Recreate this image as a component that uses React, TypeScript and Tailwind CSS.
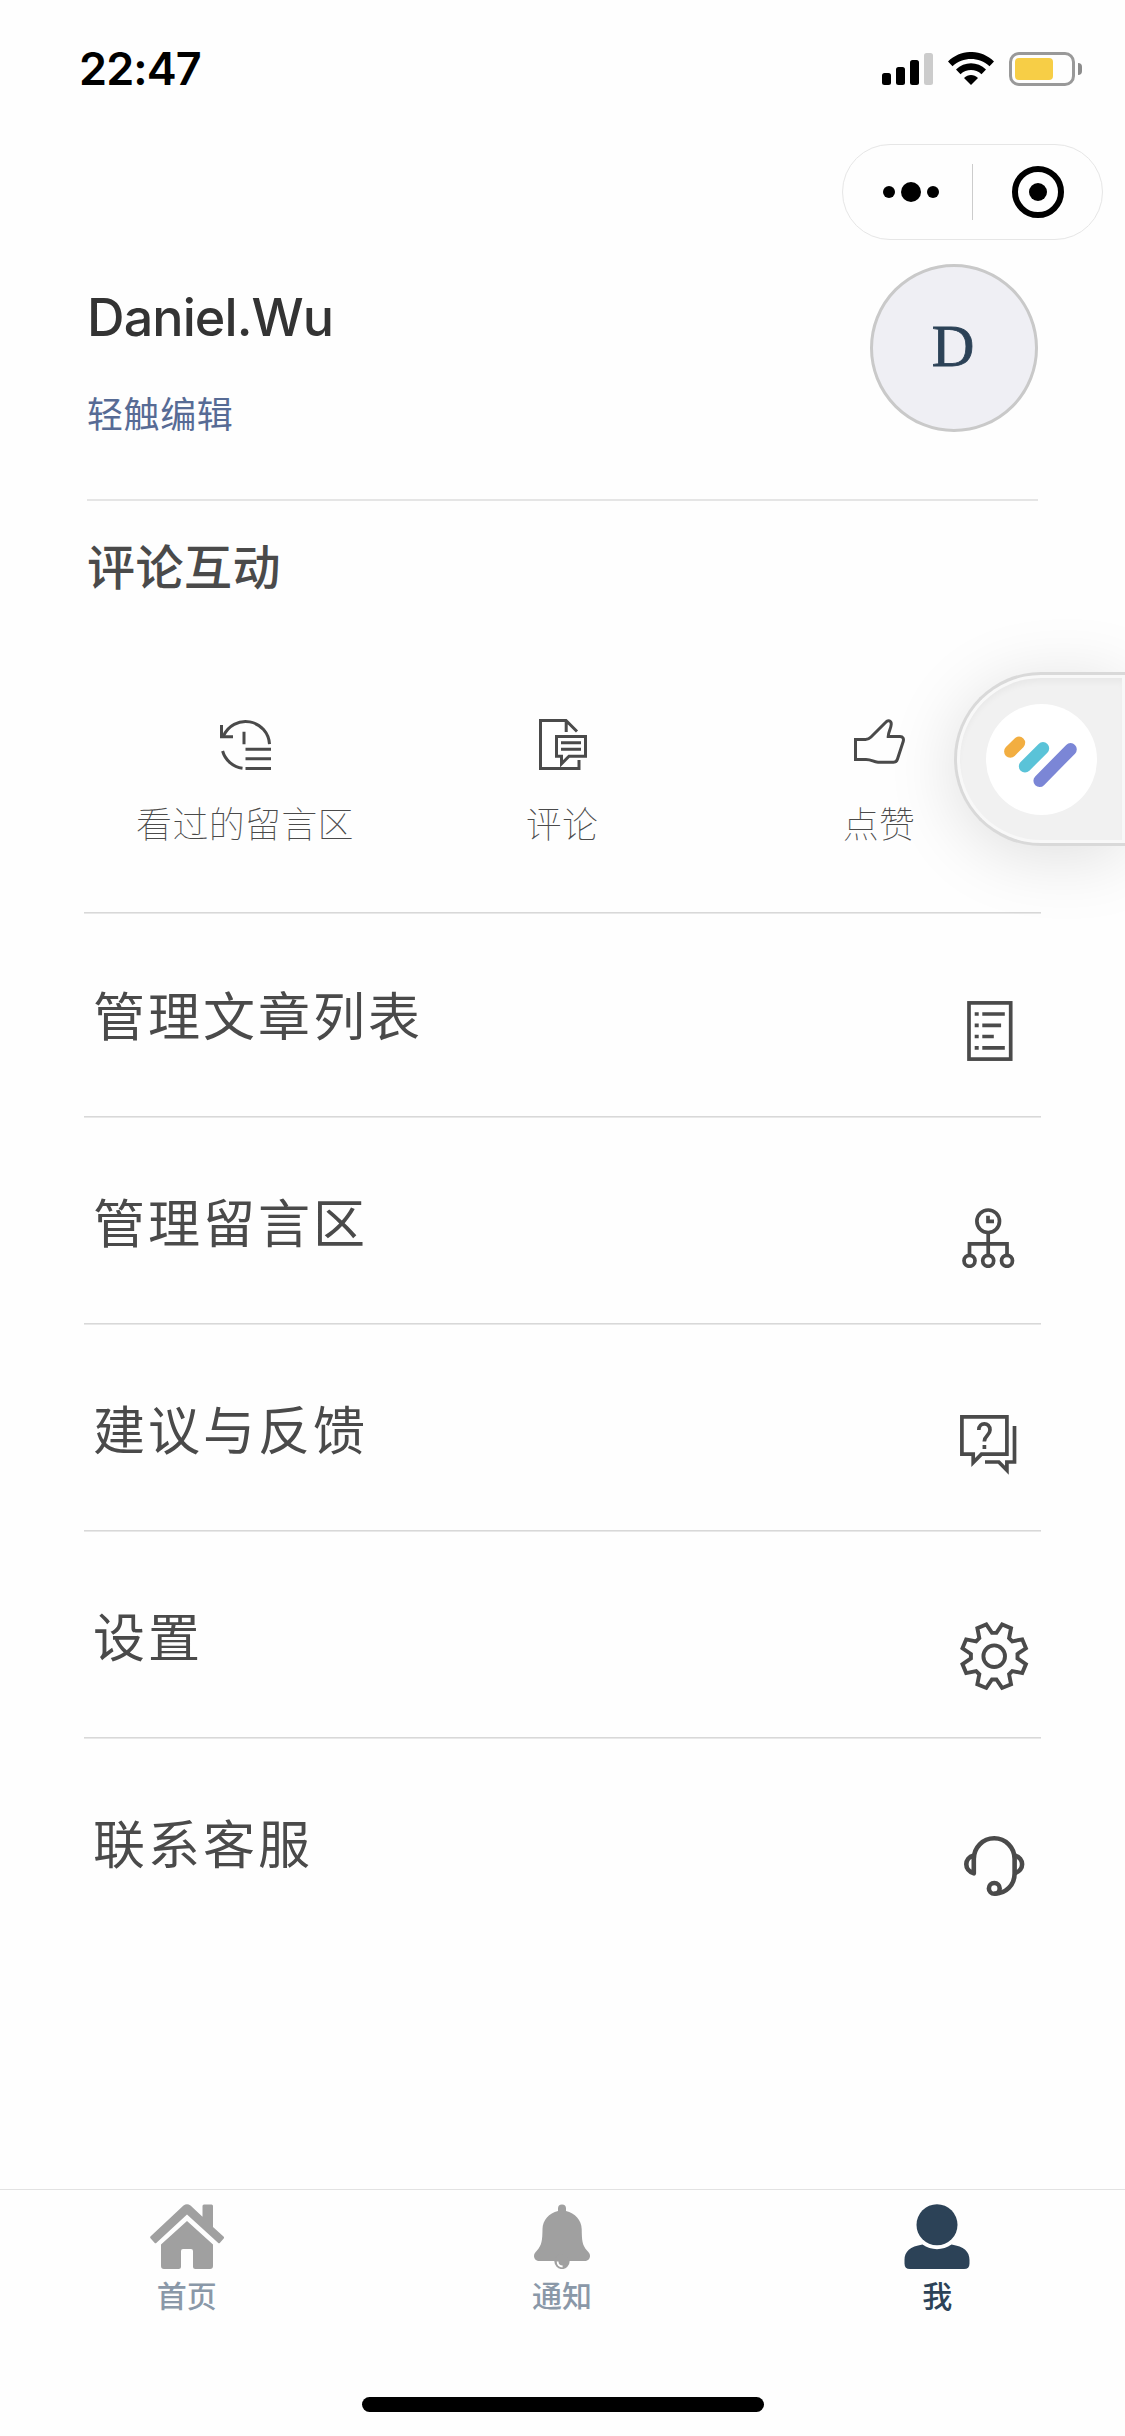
import type { ReactNode } from "react";
import clsx from "clsx";

function HistoryIcon() {
  return (
    <svg width="51" height="51" viewBox="0 0 51 51" fill="none" stroke="currentColor" strokeWidth="3">
      <path d="M3.500 17A24 24 0 0 1 49.500 25.200" />
      <path d="M1.500 6v11.800H13M24 12.700V25.300M25.500 30.300H51M25.500 39.800H51M25.500 49.400H51" />
      <path d="M2.600 32A24 24 0 0 0 22.500 49.300" />
    </svg>
  );
}

function CommentIcon() {
  return (
    <svg width="48" height="51" viewBox="0 0 48 51" fill="none" stroke="currentColor" strokeWidth="3">
      <path d="M40 41v8.500H1.500v-48H27L38 12.500M27.200 1.500V13" />
      <path d="M17.500 17.500h29v19.800H30l-7.500 7.500v-7.500h-5zM22 23.700h20M22 30.200h20" />
    </svg>
  );
}

function LikeIcon() {
  return (
    <svg width="51" height="51" viewBox="0 0 51 51" fill="none" stroke="currentColor" strokeWidth="3">
      <path d="M1.500 20.500h10q3 0 5.500-2.500L32 3c2-2.300 5.500-1.300 5.200 2.500C37 9.500 34.200 13 34.200 17.500H46c3 0 4 2.500 3.200 5L43.500 40c-.8 2.500-1.500 3.300-4 3.300H24c-5-.3-6-2.800-12-2.800H1.500z" />
    </svg>
  );
}

function ListIcon() {
  return (
    <svg width="46" height="60" viewBox="0 0 46 60" fill="none" stroke="currentColor" strokeWidth="3.700">
      <rect x="2" y="1.900" width="41.700" height="56.200" />
      <path d="M7.700 13h4M15.300 13h22.500M7.700 24.300h4M15.300 24.300h18.800M7.700 35.500h4M15.300 35.500h11.500M7.700 46.800h4M15.300 46.800h22.500" />
    </svg>
  );
}

function TreeIcon() {
  return (
    <svg width="53" height="60" viewBox="0 0 53 60" fill="none" stroke="currentColor" strokeWidth="3.700">
      <circle cx="26.200" cy="13.300" r="11.300" />
      <path d="M26 7.700v5.700h6M26.200 25v22M7.500 47V35.800H45V47" />
      <circle cx="7.500" cy="52.800" r="5.500" />
      <circle cx="26.200" cy="52.800" r="5.500" />
      <circle cx="45" cy="52.800" r="5.500" />
    </svg>
  );
}

function FeedbackIcon() {
  return (
    <svg width="57" height="60" viewBox="0 0 57 60" fill="none" stroke="currentColor" strokeWidth="3.700">
      <path d="M1.900 1.900h45v37.300H21.500l-8.300 8.300v-8.300H1.900z" />
      <path d="M54.500 11v36h-7.600v8.300L38.800 47H25" />
      <path d="M18.800 15c0-8.500 11.200-8 11.200 0 0 5.500-5.700 5.500-5.700 11.500M24.400 30v4" />
    </svg>
  );
}

// eight teeth, each one made of two valley points and two crown points
const gearPoints = Array.from({ length: 8 }, (_, i) => {
  const base = i * 45;
  return [
    [23.4, base - 5.5],
    [23.4, base + 5.5],
    [32.7, base + 14],
    [32.7, base + 31],
  ]
    .map(([r, deg]) => {
      const a = (deg * Math.PI) / 180;
      return `${(34.2 + r * Math.sin(a)).toFixed(2)},${(34.2 - r * Math.cos(a)).toFixed(2)}`;
    })
    .join(" ");
}).join(" ");

function GearIcon() {
  return (
    <svg width="69" height="69" viewBox="0 0 69 69" fill="none" stroke="currentColor" strokeWidth="3.900">
      <polygon points={gearPoints} />
      <circle cx="34.200" cy="34.200" r="10.800" />
    </svg>
  );
}

function HeadsetIcon() {
  return (
    <svg width="61" height="61" viewBox="0 0 61 61" fill="none" stroke="currentColor" strokeWidth="4.600" strokeLinejoin="round">
      <path d="M9.800 19.500C-.2 22-.2 34.500 9.800 37.300V23c0-11.500 9-20.700 20.400-20.700S50.600 11.500 50.600 23v14.500C50.600 49 42 57.800 30.300 57.800" />
      <path d="M50.600 19.500c10 2.500 10 15 0 17.800" />
      <circle cx="30.300" cy="52.400" r="5.400" />
    </svg>
  );
}

function HomeIcon() {
  return (
    <svg width="74" height="65" viewBox="0 0 74 65" fill="currentColor">
      <path d="M33.500 1.500q3.500-2.500 7 0l12 11.300V2q0-1.500 1.500-1.500h7.500Q63 .5 63 2v21l10.500 9.500q1 1 .2 2L70 38.700q-1 1-2 0L37 10.500 6.500 38.700q-1 1-2 0l-4-4.500q-.8-1 .2-2z" />
      <path d="M37 17l26 23.500V62q0 3-3 3H45.500q-2.500 0-2.500-2.500V47q0-2-2-2h-8q-2 0-2 2v15.500q0 2.500-2.500 2.500H14q-3 0-3-3V40.500z" />
    </svg>
  );
}

function BellIcon() {
  return (
    <svg width="56" height="65" viewBox="0 0 56 65" fill="currentColor">
      <path d="M24 4.500a4 4 0 0 1 8 0V7c9 2 15.500 9 15.700 18 .2 11 .3 16 5.300 21.500 2 2.300 3 3 3 5.500 0 3-2.500 5-5.500 5h-45C2.500 57 0 55 0 52c0-2.500 1-3.200 3-5.500C8 41 8.300 36 8.500 25 8.700 16 15 9 24 7z" />
      <circle cx="28" cy="57.500" r="7.600" />
      <path d="M23.600 57.500c0 3 1.800 4.800 5 5" fill="none" stroke="#fff" strokeWidth="1.800" />
    </svg>
  );
}

function UserIcon() {
  return (
    <svg width="66" height="65" viewBox="0 0 66 65" fill="currentColor">
      <circle cx="33" cy="20.800" r="20.500" />
      <path d="M18.500 40.500C6 42.500.5 47.500.5 56v3.500q0 5.500 5.500 5.500h54q5.500 0 5.500-5.500V56c0-8.500-5.500-13.500-18-15.500-8.500 6.200-20.500 6.200-29 0z" />
    </svg>
  );
}

const shortcuts = [
  { label: "看过的留言区", icon: <HistoryIcon /> },
  { label: "评论", icon: <CommentIcon /> },
  { label: "点赞", icon: <LikeIcon /> },
];

const menu = [
  { label: "管理文章列表", icon: <ListIcon />, iconClass: "pt-[90px] pl-[7px]" },
  { label: "管理留言区", icon: <TreeIcon />, iconClass: "pt-[90px] pl-[2px]" },
  { label: "建议与反馈", icon: <FeedbackIcon />, iconClass: "pt-[90px]" },
  { label: "设置", icon: <GearIcon />, iconClass: "pt-[90px]" },
  { label: "联系客服", icon: <HeadsetIcon />, iconClass: "pt-[97px] pl-1" },
];

const tabs = [
  { label: "首页", icon: <HomeIcon />, active: false },
  { label: "通知", icon: <BellIcon />, active: false },
  { label: "我", icon: <UserIcon />, active: true },
];

function StatusBar() {
  return (
    <div className="flex h-[144px] items-start justify-between pt-[52px] pr-[43px] pl-[79px]">
      <span className="text-[45px] leading-[34px] font-semibold tracking-[-0.900px] text-black">22:47</span>
      <div className="flex h-[34px] items-start">
        <div className="flex h-[33px] items-end gap-[5px]">
          <span className="h-3 w-[9px] rounded-[2.500px] bg-black" />
          <span className="h-[18px] w-[9px] rounded-[2.500px] bg-black" />
          <span className="h-[25px] w-[9px] rounded-[2.500px] bg-black" />
          <span className="h-8 w-[9px] rounded-[2.500px] bg-[#cccccc]" />
        </div>
        <svg className="ml-[15px]" width="46" height="33" viewBox="0 0 46 33">
          <path d="M0 9.500C13-3.200 33-3.200 46 9.500L41.500 14.200C31 4.500 15 4.500 4.500 14.200z" />
          <path d="M8 17.500c8.500-8.300 21.500-8.300 30 0l-4.500 4.700c-6-5.500-15-5.500-21 0z" />
          <path d="M16 26c4-4 10-4 14 0l-7 7z" />
        </svg>
        <div className="ml-[15px] h-[34px] w-[66px] rounded-[10px] border-3 border-[#999999] p-[3px]">
          <div className="h-[22px] w-[38px] rounded-[4px] bg-[#f7ce46]" />
        </div>
        <span className="mt-[11px] ml-[3px] h-3 w-1 rounded-r-full bg-[#8c8c8c]" />
      </div>
    </div>
  );
}

function Capsule() {
  return (
    <div className="mr-[22px] ml-auto flex h-24 w-[261px] items-center rounded-full border border-[#e6e6e6]">
      <div className="flex w-[129px] items-center justify-center gap-[6px] pl-[7px]">
        <span className="size-3 rounded-full bg-black" />
        <span className="size-[20px] rounded-full bg-black" />
        <span className="size-3 rounded-full bg-black" />
      </div>
      <span className="h-14 w-px bg-[#cccccc]" />
      <div className="flex flex-1 justify-center">
        <div className="flex size-[52px] items-center justify-center rounded-full border-[6.500px] border-black">
          <span className="size-[18px] rounded-full bg-black" />
        </div>
      </div>
    </div>
  );
}

function Divider({ className }: { className?: string }) {
  return <div className={clsx("h-px bg-[#d8d8d8] shadow-[0_1px_0_#e8e8e8]", className)} />;
}

function Section({ children }: { children: ReactNode }) {
  return <section className="mr-[87px] ml-[87px]">{children}</section>;
}

function FloatingWidget() {
  return (
    <div className="absolute top-[672px] right-0 h-[174px] w-[171px] rounded-l-full border-y-3 border-l-3 border-[#d9d9d9] bg-[#f8f8f8] p-[3px] shadow-[0_10px_70px_rgba(0,0,0,0.13)]">
      <div className="flex h-full items-center rounded-l-full bg-[#f1f1f1] pl-[26px] shadow-[inset_0_6px_6px_-2px_rgba(0,0,0,0.04)]">
        <div className="size-[111px] rounded-full bg-white">
          <svg width="111" height="111" viewBox="0 0 111 111" fill="none" strokeWidth="12.400" strokeLinecap="round">
            <path d="M24.300 47.500l8.700-8.700" stroke="#f2ae41" />
            <path d="M39 62.300l18-18" stroke="#5ac3d8" />
            <path d="M53.600 76.800l31-31.500" stroke="#7b86d6" />
          </svg>
        </div>
      </div>
    </div>
  );
}

export default function App() {
  return (
    <div className="relative flex h-[2436px] w-[1125px] flex-col overflow-hidden bg-[#fefefe] font-['Inter','Noto_Sans_CJK_SC',sans-serif] text-[#4a4a4a]">
      <StatusBar />
      <Capsule />

      <Section>
        <div className="flex h-[259px] justify-between pt-6">
          <div className="flex flex-col">
            <h1 className="mt-[24px] text-[52px] leading-[60px] font-medium tracking-[-0.900px] text-[#333333]">
              Daniel.Wu
            </h1>
            <a className="mt-[42px] text-[36px] leading-[50px] tracking-[0.600px] text-[#576b95]">轻触编辑</a>
          </div>
          <div className="flex size-[168px] items-center justify-center rounded-full border-3 border-[#c9c9c9] bg-[#efeff4] pr-[2px] pb-1 font-['Liberation_Serif',serif] text-[59px] leading-none text-[#2c4257] [-webkit-text-stroke:0.800px_#2c4257]">
            D
          </div>
        </div>
        <div className="h-[2px] bg-[#e5e5e5]" />

        <h2 className="mt-[35px] text-[48px] leading-[64px] font-medium tracking-[0.500px]">评论互动</h2>
        <div className="mt-[119px] flex">
          {shortcuts.map((item) => (
            <div key={item.label} className="flex flex-1 flex-col items-center">
              {item.icon}
              <span className="mt-[30px] pr-px text-[36px] leading-[50px] font-thin tracking-[0.300px]">
                {item.label}
              </span>
            </div>
          ))}
        </div>
      </Section>

      <Divider className="mt-[62px] mr-[84px] ml-[84px]" />
      <ul className="-mt-[2px] mr-[84px] ml-[84px]">
        {menu.map((item, i) => (
          <li key={item.label} className="flex h-[207px] flex-col">
            <div className="flex flex-1 items-start justify-between">
              <span className="pt-[73px] pl-[9px] text-[52px] leading-[68px] tracking-[3px]">{item.label}</span>
              <div className={clsx("w-[81px]", item.iconClass)}>{item.icon}</div>
            </div>
            {i < menu.length - 1 && <Divider className="relative -top-px" />}
          </li>
        ))}
      </ul>

      <nav className="mt-auto flex h-[247px] flex-col border-t border-[#e2e2e2]">
        <div className="-ml-px flex pt-[14px]">
          {tabs.map((tab) => (
            <div
              key={tab.label}
              className={clsx("flex flex-1 flex-col items-center", tab.active ? "text-[#2c4257]" : "text-[#a0a0a0]")}
            >
              {tab.icon}
              <span
                className={clsx(
                  "mt-[6px] text-[30px] leading-[42px] font-medium",
                  tab.active ? "text-[#2c4257]" : "text-[#8a98a8]",
                )}
              >
                {tab.label}
              </span>
            </div>
          ))}
        </div>
        <div className="mx-auto mt-auto mb-6 h-[15px] w-[402px] rounded-full bg-black" />
      </nav>

      <FloatingWidget />
    </div>
  );
}
